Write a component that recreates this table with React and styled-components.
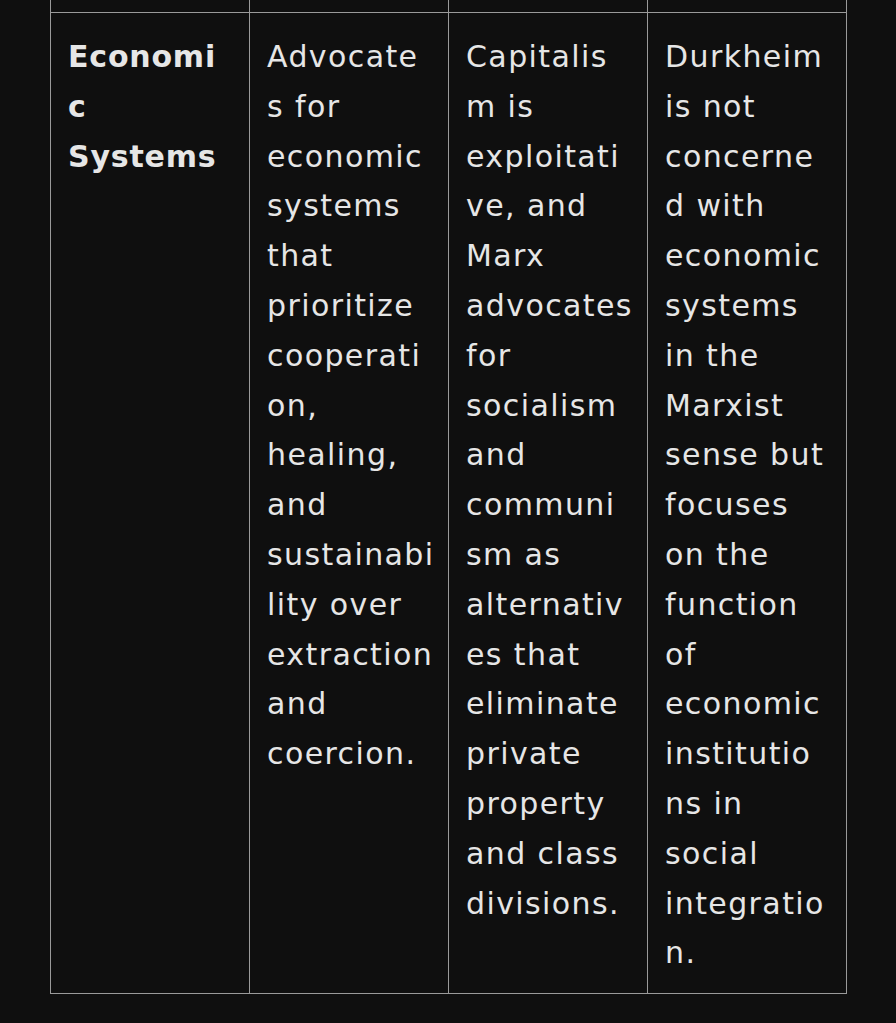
import React from 'react';
import styled, { createGlobalStyle } from 'styled-components';

const rows = [
  {
    head: ['Economi', 'c', 'Systems'],
    cells: [
      ['Advocate', 's for', 'economic', 'systems', 'that', 'prioritize', 'cooperati', 'on,', 'healing,', 'and', 'sustainabi', 'lity over', 'extraction', 'and', 'coercion.'],
      ['Capitalis', 'm is', 'exploitati', 've, and', 'Marx', 'advocates', 'for', 'socialism', 'and', 'communi', 'sm as', 'alternativ', 'es that', 'eliminate', 'private', 'property', 'and class', 'divisions.'],
      ['Durkheim', 'is not', 'concerne', 'd with', 'economic', 'systems', 'in the', 'Marxist', 'sense but', 'focuses', 'on the', 'function', 'of', 'economic', 'institutio', 'ns in', 'social', 'integratio', 'n.'],
    ],
  },
];

const GlobalStyle = createGlobalStyle`
  html, body {
    margin: 0;
    background: #0f0f0f;
  }
`;

const Page = styled.div`
  padding: 0 49px 0 50px;
  min-height: 1023px;
  box-sizing: border-box;
`;

const Table = styled.table`
  width: 797px;
  border-collapse: collapse;
  table-layout: fixed;
  font-family: "DejaVu Sans", "Open Sans", sans-serif;
  color: #e6e6e6;
`;

const Cell = styled.td`
  border: 1px solid #9a9a9a;
  border-top: ${(p) => (p.$cut ? 'none' : '1px solid #9a9a9a')};
  height: ${(p) => (p.$cut ? '12px' : 'auto')};
  padding: ${(p) => (p.$cut ? '0' : '19px 17px 15px')};
  vertical-align: top;
  font-size: 30px;
  line-height: 49.8px;
  letter-spacing: ${(p) => (p.$head ? '0.8px' : '1.4px')};
  font-weight: ${(p) => (p.$head ? 700 : 400)};
`;

const Line = styled.span`
  display: block;
  white-space: nowrap;
`;

const Lines = ({ items }) => items.map((t, i) => <Line key={i}>{t}</Line>);

export default function App() {
  return (
    <Page>
      <GlobalStyle />
      <Table>
        <tbody>
          <tr>
            <Cell $cut />
            <Cell $cut />
            <Cell $cut />
            <Cell $cut />
          </tr>
          {rows.map((r, i) => (
            <tr key={i}>
              <Cell $head>
                <Lines items={r.head} />
              </Cell>
              {r.cells.map((c, j) => (
                <Cell key={j}>
                  <Lines items={c} />
                </Cell>
              ))}
            </tr>
          ))}
        </tbody>
      </Table>
    </Page>
  );
}
